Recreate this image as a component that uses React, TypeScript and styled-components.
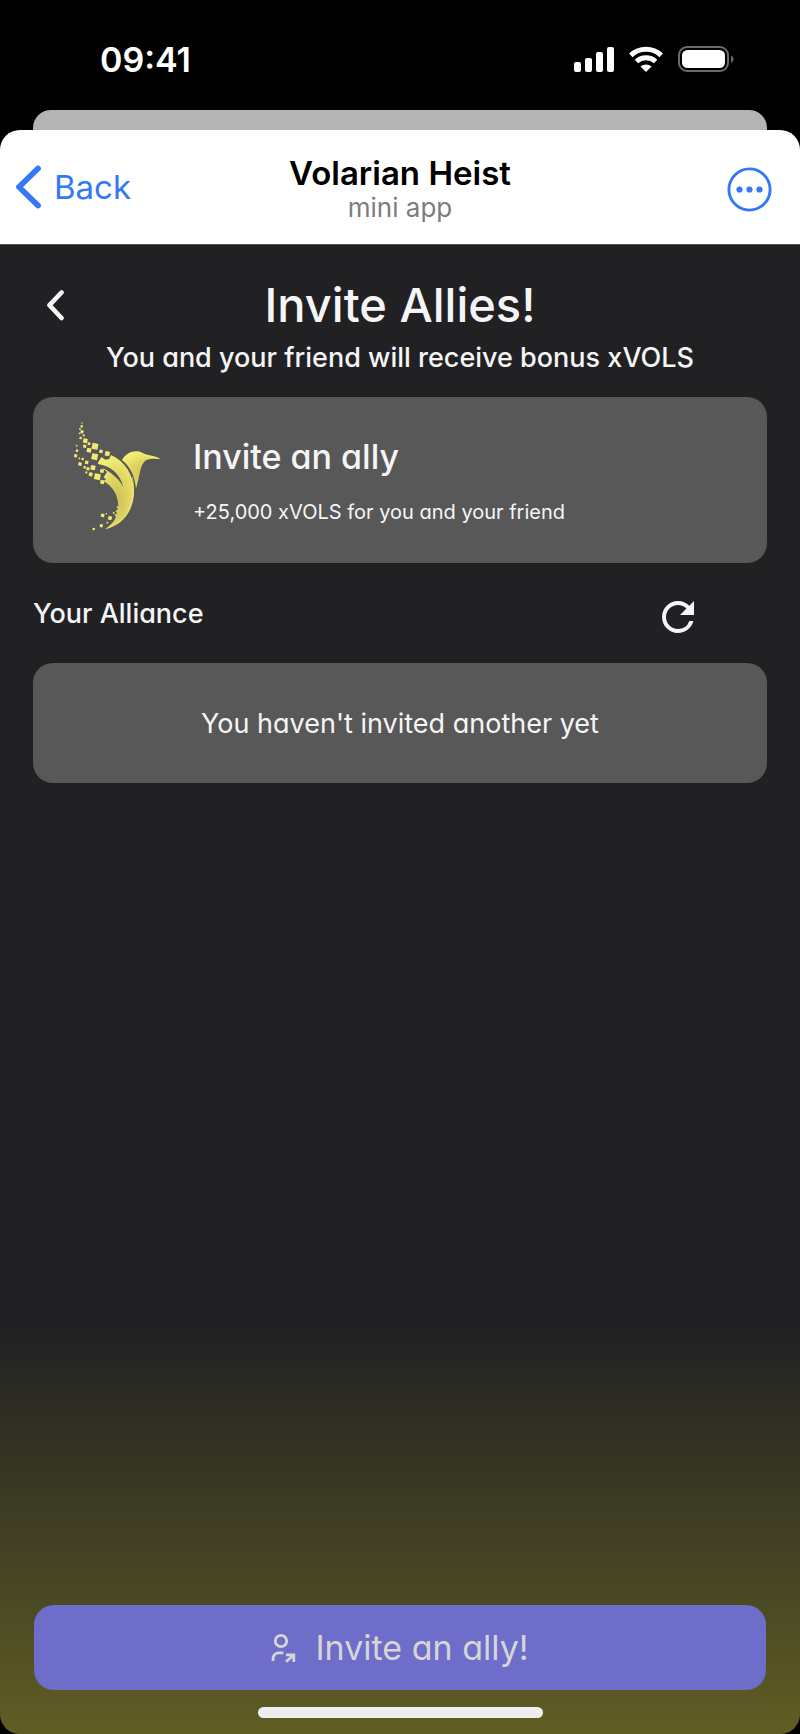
import styled, { createGlobalStyle } from 'styled-components';
import { MdRefresh } from 'react-icons/md';

const GlobalStyle = createGlobalStyle`
  * {
    box-sizing: border-box;
  }

  body {
    margin: 0;
    background: #000;
    font-family: Inter, 'Liberation Sans', sans-serif;
  }

  button {
    padding: 0;
    border: 0;
    background: none;
    color: inherit;
    font: inherit;
    cursor: pointer;
  }

  svg {
    display: block;
    flex-shrink: 0;
  }
`;

const Screen = styled.div`
  display: flex;
  flex-direction: column;
  min-height: 100vh;
`;

const StatusBar = styled.div`
  display: flex;
  align-items: center;
  justify-content: space-between;
  height: 110px;
  padding: 8px 66px 0 100px;
  color: #fff;
`;

const Time = styled.span`
  font-size: 34px;
  font-weight: 600;
`;

const StatusIcons = styled.div`
  display: flex;
  align-items: center;
  gap: 15px;
`;

const BackSheet = styled.div`
  height: 20px;
  margin: 0 33px;
  border-radius: 18px 18px 0 0;
  background: #b4b4b4;
`;

const Sheet = styled.div`
  display: flex;
  flex: 1;
  flex-direction: column;
  overflow: hidden;
  border-radius: 20px;
  background: #212123;
`;

const NavBar = styled.header`
  display: grid;
  grid-template-columns: 1fr auto 1fr;
  align-items: center;
  height: 115px;
  padding: 0 28px 0 15px;
  border-bottom: 1px solid #565657;
  background: #fff;
`;

const BackButton = styled.button`
  display: flex;
  align-items: center;
  justify-self: start;
  gap: 12px;
  color: #3478f6;
  font-size: 33px;
`;

const NavTitle = styled.div`
  padding: 4px 0 0 13px;
  text-align: center;
`;

const AppName = styled.div`
  color: #000;
  font-size: 33px;
  font-weight: 600;
  line-height: 38px;
`;

const AppKind = styled.div`
  color: #7c7c7e;
  font-size: 26px;
  line-height: 32px;
`;

const MoreButton = styled.button`
  justify-self: end;
  padding-top: 4px;
  color: #3478f6;
`;

const Page = styled.main`
  display: flex;
  flex: 1;
  flex-direction: column;
  padding: 28px 33px 16px;
  background: linear-gradient(to top, #605d24, #212123 404px);
  color: #f5f5f7;
  font-feature-settings: 'cv11';
`;

const PageHeader = styled.div`
  display: grid;
  grid-template-columns: 1fr auto 1fr;
  align-items: center;
  height: 62px;
`;

const PageBack = styled.button`
  justify-self: start;
  padding: 2px 12px 0;
`;

const Title = styled.h1`
  margin: 0;
  font-size: 47px;
  font-weight: 500;
`;

const Subtitle = styled.p`
  margin: 0 0 16px;
  font-size: 27px;
  font-weight: 500;
  line-height: 46px;
  text-align: center;
`;

const Card = styled.section`
  display: flex;
  align-items: center;
  border-radius: 20px;
  background: #585858;
`;

const InviteCard = styled(Card)`
  gap: 28px;
  height: 166px;
  padding: 0 39px;
`;

const EmptyCard = styled(Card)`
  justify-content: center;
  height: 120px;
  font-size: 27px;
`;

const InviteText = styled.div`
  display: grid;
  gap: 20px;
  padding-top: 4px;
`;

const InviteTitle = styled.h2`
  margin: 0;
  font-size: 34px;
  font-weight: 500;
  line-height: 40px;
`;

const InviteBonus = styled.p`
  margin: 0;
  font-size: 20px;
  line-height: 30px;
`;

const AllianceRow = styled.div`
  display: flex;
  align-items: flex-start;
  justify-content: space-between;
  padding: 30px 65px 22px 0;
`;

const AllianceTitle = styled.h2`
  margin: 0;
  font-size: 27px;
  font-weight: 500;
  line-height: 42px;
`;

const Footer = styled.footer`
  display: grid;
  gap: 17px;
  margin-top: auto;
`;

const InviteButton = styled.button`
  display: flex;
  align-items: center;
  justify-content: center;
  gap: 19px;
  height: 85px;
  margin: 0 1px;
  border-radius: 20px;
  background: #6e6dca;
  color: #d6d6d6;
  font-size: 34px;
`;

const HomeIndicator = styled.div`
  justify-self: center;
  width: 285px;
  height: 11px;
  border-radius: 6px;
  background: #eee;
`;

// [x, y, size] of every loose pixel around the bird
const pixels = [
  [66, 39, 4], [65, 49, 7], [60, 57, 5], [66, 65, 9], [59, 70, 5], [71, 76, 6],
  [62, 84, 7], [76, 92, 13], [87, 101, 8], [74, 109, 9], [105, 109, 18],
  [87, 121, 13], [123, 124, 10], [142, 131, 14], [104, 140, 18], [50, 107, 5],
  [51, 122, 7], [47, 137, 9], [58, 145, 5], [68, 147, 7], [60, 162, 10],
  [80, 157, 10], [74, 172, 7], [84, 176, 9], [99, 173, 14], [126, 183, 11],
  [79, 187, 6], [92, 193, 11], [112, 200, 18], [127, 216, 12], [128, 316, 10],
  [139, 311, 4], [150, 324, 11], [161, 309, 5], [124, 347, 9],
  [142, 338, 5], [101, 357, 7],
];

function Bird() {
  return (
    <svg width="93" height="120" viewBox="36 30 279 360" aria-hidden="true">
      <defs>
        <radialGradient id="gold" cx="0.55" cy="0.6" r="0.6">
          <stop offset="0" stopColor="#cdc25c" />
          <stop offset="0.55" stopColor="#e0d762" />
          <stop offset="1" stopColor="#f4ee72" />
        </radialGradient>
      </defs>
      <g fill="url(#gold)">
        <path d="M186 150C196 131 215 122 234 124C246 126 251 132 263 134C276 137 289 139 301 146C284 147 267 143 255 153C241 164 240 196 228 236C225 203 213 171 186 150Z" />
        <path d="M124 141L136 149L148 147L153 135C196 154 220 196 222 240C224 301 187 348 134 358C154 345 164 332 168 320L163 315L172 309L166 304L174 298L169 291L175 287C173 253 158 229 131 213L138 209L131 202L141 186L113 160Z" />
      </g>
      <path d="M112 162C154 167 181 195 190 230C176 206 151 184 122 171Z" fill="#585858" />
      <path d="M217 202C226 245 217 303 172 341" fill="none" stroke="#f4ee82" strokeWidth="2" />
      <path d="M190 148C203 130 227 123 245 133C265 139 280 143 298 146" fill="none" stroke="#f4ee82" strokeWidth="2" />
      <g fill="#f0ea70">
        {pixels.map(([x, y, size]) => (
          <rect
            key={`${x}-${y}`}
            x={x - size / 2}
            y={y - size / 2}
            width={size}
            height={size}
            rx="1"
            transform={`rotate(12 ${x} ${y})`}
          />
        ))}
      </g>
    </svg>
  );
}

function SignalIcon() {
  return (
    <svg width="40" height="26" viewBox="0 0 40 26" fill="#fff" aria-hidden="true">
      <rect x="0" y="16" width="7" height="10" rx="2" />
      <rect x="11" y="12" width="7" height="14" rx="2" />
      <rect x="22" y="6" width="7" height="20" rx="2" />
      <rect x="33" y="1" width="7" height="25" rx="2" />
    </svg>
  );
}

function WifiIcon() {
  return (
    <svg width="34" height="26" viewBox="0 0 34 26" aria-hidden="true">
      <g fill="none" stroke="#fff" strokeWidth="5">
        <path d="M1.8 9.4C10.4 1.3 23.6 1.3 32.2 9.4" />
        <path d="M7.4 15.5C12.8 10.5 21.2 10.5 26.6 15.5" />
      </g>
      <path d="M11.4 20.6C14.6 17.7 19.4 17.7 22.6 20.6L17 26Z" fill="#fff" />
    </svg>
  );
}

function BatteryIcon() {
  return (
    <svg width="56" height="26" viewBox="0 0 56 26" aria-hidden="true">
      <rect x="1" y="1" width="49" height="24" rx="8" fill="none" stroke="#6b6b6b" strokeWidth="2" />
      <rect x="4" y="4" width="43" height="18" rx="5.5" fill="#fff" />
      <path d="M53 9.5C56.3 11 56.3 15.5 53 17Z" fill="#6b6b6b" />
    </svg>
  );
}

export default function App() {
  return (
    <Screen>
      <GlobalStyle />
      <StatusBar>
        <Time>09:41</Time>
        <StatusIcons>
          <SignalIcon />
          <WifiIcon />
          <BatteryIcon />
        </StatusIcons>
      </StatusBar>
      <BackSheet />

      <Sheet>
        <NavBar>
          <BackButton>
            <svg width="27" height="44" viewBox="0 0 27 44" aria-hidden="true">
              <path d="M23 3.5L4 22L23 40.5" fill="none" stroke="currentColor" strokeWidth="5.8" strokeLinecap="round" strokeLinejoin="round" />
            </svg>
            Back
          </BackButton>
          <NavTitle>
            <AppName>Volarian Heist</AppName>
            <AppKind>mini app</AppKind>
          </NavTitle>
          <MoreButton aria-label="More options">
            <svg width="45" height="45" viewBox="0 0 45 45" fill="currentColor" aria-hidden="true">
              <circle cx="22.5" cy="22.5" r="20.6" fill="none" stroke="currentColor" strokeWidth="2.9" />
              <circle cx="12.5" cy="22.5" r="3.1" />
              <circle cx="22.5" cy="22.5" r="3.1" />
              <circle cx="32.5" cy="22.5" r="3.1" />
            </svg>
          </MoreButton>
        </NavBar>

        <Page>
          <PageHeader>
            <PageBack aria-label="Go back">
              <svg width="20" height="32" viewBox="0 0 20 32" aria-hidden="true">
                <path d="M16.5 3.5L4.5 16.2L16.5 29" fill="none" stroke="currentColor" strokeWidth="4.6" strokeLinecap="round" strokeLinejoin="round" />
              </svg>
            </PageBack>
            <Title>Invite Allies!</Title>
          </PageHeader>
          <Subtitle>You and your friend will receive bonus xVOLS</Subtitle>

          <InviteCard>
            <Bird />
            <InviteText>
              <InviteTitle>Invite an ally</InviteTitle>
              <InviteBonus>+25,000 xVOLS for you and your friend</InviteBonus>
            </InviteText>
          </InviteCard>

          <AllianceRow>
            <AllianceTitle>Your Alliance</AllianceTitle>
            <button aria-label="Refresh alliance">
              <MdRefresh size={48} />
            </button>
          </AllianceRow>
          <EmptyCard>You haven&apos;t invited another yet</EmptyCard>

          <Footer>
            <InviteButton>
              <svg width="25" height="32" viewBox="0 0 25 32" fill="none" stroke="currentColor" strokeWidth="2.8" aria-hidden="true">
                <circle cx="10" cy="9" r="5.7" />
                <path d="M2 29V27C2 23 4.5 20.8 8 20.8H12.4" />
                <path d="M15 29.8L22.5 23M15 22.8H22.8V30" />
              </svg>
              Invite an ally!
            </InviteButton>
            <HomeIndicator />
          </Footer>
        </Page>
      </Sheet>
    </Screen>
  );
}
